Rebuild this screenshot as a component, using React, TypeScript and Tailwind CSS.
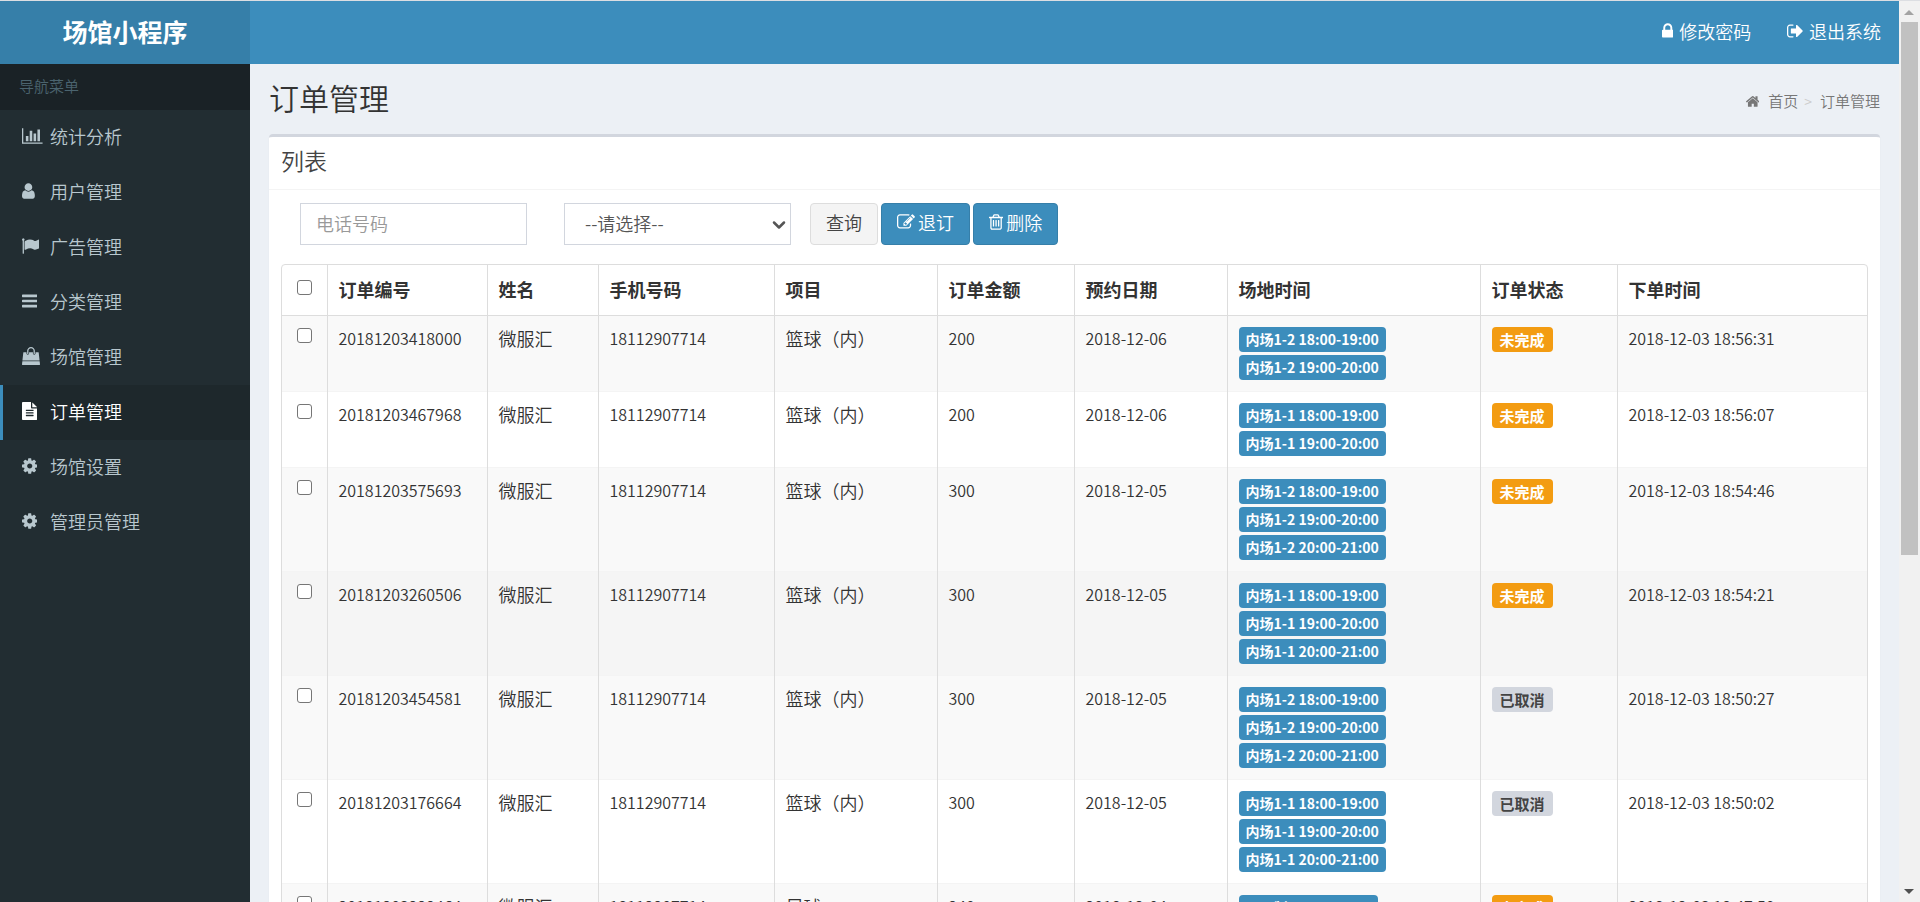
import React, { useState } from 'react';
import { ChevronDown } from 'lucide-react';
import clsx from 'clsx';

const ICONS = {
  chart: {
    box: '0 0 2048 1792',
    d: 'M640 896v512h-256v-512h256zm384-512v1024h-256v-1024h256zm1024 1152v128h-2048v-1536h128v1408h1920zm-640-896v768h-256v-768h256zm384-384v1152h-256v-1152h256z',
  },
  user: {
    box: '256 0 1280 1792',
    d: 'M1536 1399q0 109-62.5 187t-150.5 78h-854q-88 0-150.5-78t-62.5-187q0-85 8.5-160.5t31.5-152 58.5-131 94-89 134.5-34.5q131 128 313 128t313-128q76 0 134.5 34.5t94 89 58.5 131 31.5 152 8.5 160.5zm-256-887q0 159-112.5 271.5t-271.5 112.5-271.5-112.5-112.5-271.5 112.5-271.5 271.5-112.5 271.5 112.5 112.5 271.5z',
  },
  flag: {
    box: '64 0 1728 1792',
    d: 'M320 256q0 72-64 110v1266q0 13-9.5 22.5t-22.5 9.5h-64q-13 0-22.5-9.5t-9.5-22.5v-1266q-64-38-64-110 0-53 37.5-90.5t90.5-37.5 90.5 37.5 37.5 90.5zm1472 64v763q0 25-12.5 38.5t-39.5 27.5q-215 116-369 116-61 0-123.5-22t-108.5-48-115.5-48-142.5-22q-192 0-464 146-17 9-33 9-26 0-45-19t-19-45v-742q0-32 31-55 21-14 79-43 236-120 421-120 107 0 200 29t219 88q38 19 88 19 54 0 117.5-21t110-47 88-47 54.5-21q26 0 45 19t19 45z',
  },
  bars: {
    box: '128 0 1536 1792',
    d: 'M1664 1344v128q0 26-19 45t-45 19h-1408q-26 0-45-19t-19-45v-128q0-26 19-45t45-19h1408q26 0 45 19t19 45zm0-512v128q0 26-19 45t-45 19h-1408q-26 0-45-19t-19-45v-128q0-26 19-45t45-19h1408q26 0 45 19t19 45zm0-512v128q0 26-19 45t-45 19h-1408q-26 0-45-19t-19-45v-128q0-26 19-45t45-19h1408q26 0 45 19t19 45z',
  },
  bag: {
    box: '0 0 1792 1792',
    d: 'M1757 1408l35 313q3 28-16 50-19 21-48 21h-1664q-29 0-48-21-19-22-16-50l35-313h1722zm-93-839l86 775h-1708l86-775q3-24 21-40.5t43-16.5h256v128q0 53 37.5 90.5t90.5 37.5 90.5-37.5 37.5-90.5v-128h384v128q0 53 37.5 90.5t90.5 37.5 90.5-37.5 37.5-90.5v-128h256q25 0 43 16.5t21 40.5zm-384-185v256q0 26-19 45t-45 19-45-19-19-45v-256q0-106-75-181t-181-75-181 75-75 181v256q0 26-19 45t-45 19-45-19-19-45v-256q0-159 112.5-271.5t271.5-112.5 271.5 112.5 112.5 271.5z',
  },
  file: {
    box: '128 0 1536 1792',
    d: 'M1596 476q14 14 28 36h-472v-472q22 14 36 28zm-476 164h544v1056q0 40-28 68t-68 28h-1344q-40 0-68-28t-28-68v-1600q0-40 28-68t68-28h800v544q0 40 28 68t68 28zm160 736v-64q0-14-9-23t-23-9h-704q-14 0-23 9t-9 23v64q0 14 9 23t23 9h704q14 0 23-9t9-23zm0-256v-64q0-14-9-23t-23-9h-704q-14 0-23 9t-9 23v64q0 14 9 23t23 9h704q14 0 23-9t9-23zm0-256v-64q0-14-9-23t-23-9h-704q-14 0-23 9t-9 23v64q0 14 9 23t23 9h704q14 0 23-9t9-23z',
  },
  cog: {
    box: '128 0 1536 1792',
    d: 'M1152 896q0-106-75-181t-181-75-181 75-75 181 75 181 181 75 181-75 75-181zm512-109v222q0 12-8 23t-20 13l-185 28q-19 54-39 91 35 50 107 138 10 12 10 25t-9 23q-27 37-99 108t-94 71q-12 0-26-9l-138-108q-44 23-91 38-16 136-29 186-7 28-36 28h-222q-14 0-24.5-8.5t-11.5-21.5l-28-184q-49-16-90-37l-141 107q-10 9-25 9-14 0-25-11-126-114-165-168-7-10-7-23 0-12 8-23 15-21 51-66.5t54-70.5q-27-50-41-99l-183-27q-13-2-21-12.5t-8-23.5v-222q0-12 8-23t19-13l186-28q14-46 39-92-40-57-107-138-10-12-10-24 0-10 9-23 26-36 98.5-107.5t94.5-71.5q13 0 26 10l138 107q44-23 91-38 16-136 29-186 7-28 36-28h222q14 0 24.5 8.5t11.5 21.5l28 184q49 16 90 37l142-107q9-9 24-9 13 0 25 10 129 119 165 170 7 8 7 22 0 12-8 23-15 21-51 66.5t-54 70.5q26 50 41 98l183 28q13 2 21 12.5t8 23.5z',
  },
  lock: {
    box: '320 0 1152 1792',
    d: 'M640 768h512v-192q0-106-75-181t-181-75-181 75-75 181v192zm832 96v576q0 40-28 68t-68 28h-960q-40 0-68-28t-28-68v-576q0-40 28-68t68-28h32v-192q0-184 132-316t316-132 316 132 132 316v192h32q40 0 68 28t28 68z',
  },
  signOut: {
    box: '64 0 1568 1792',
    d: 'M704 1440q0 4 1 20t.5 26.5-3 23.5-10 19.5-20.5 6.5h-320q-119 0-203.5-84.5t-84.5-203.5v-704q0-119 84.5-203.5t203.5-84.5h320q13 0 22.5 9.5t9.5 22.5q0 4 1 20t.5 26.5-3 23.5-10 19.5-20.5 6.5h-320q-66 0-113 47t-47 113v704q0 66 47 113t113 47h312l11.5 1 11.5 3 8 5.5 7 9 2 13.5zm928-544q0 26-19 45l-544 544q-19 19-45 19t-45-19-19-45v-288h-448q-26 0-45-19t-19-45v-384q0-26 19-45t45-19h448v-288q0-26 19-45t45-19 45 19l544 544q19 19 19 45z',
  },
  home: {
    box: '88 0 1616 1792',
    d: 'M1472 992v480q0 26-19 45t-45 19h-384v-384h-256v384h-384q-26 0-45-19t-19-45v-480q0-1 .5-3t.5-3l575-474 575 474q1 2 1 6zm223-69l-62 74q-8 9-21 11h-3q-13 0-21-7l-692-577-692 577q-12 8-24 7-13-2-21-11l-62-74q-8-10-7-23.5t11-21.5l719-599q32-26 76-26t76 26l244 204v-195q0-14 9-23t23-9h192q14 0 23 9t9 23v408l219 182q10 8 11 21.5t-7 23.5z',
  },
  edit: {
    box: '0 0 1792 1792',
    d: 'M888 1184l116-116-152-152-116 116v56h96v96h56zm440-720q-16-16-33 1l-350 350q-17 17-1 33t33-1l350-350q17-17 1-33zm80 594v190q0 119-84.5 203.5t-203.5 84.5h-832q-119 0-203.5-84.5t-84.5-203.5v-832q0-119 84.5-203.5t203.5-84.5h832q63 0 117 25 15 7 18 23 3 17-9 29l-49 49q-14 14-32 8-23-6-45-6h-832q-66 0-113 47t-47 113v832q0 66 47 113t113 47h832q66 0 113-47t47-113v-126q0-13 9-22l64-64q15-15 35-7t20 29zm-96-738l288 288-672 672h-288v-288zm444 132l-92 92-288-288 92-92q28-28 68-28t68 28l152 152q28 28 28 68t-28 68z',
  },
  trash: {
    box: '192 0 1408 1792',
    d: 'M704 736v576q0 14-9 23t-23 9h-64q-14 0-23-9t-9-23v-576q0-14 9-23t23-9h64q14 0 23 9t9 23zm256 0v576q0 14-9 23t-23 9h-64q-14 0-23-9t-9-23v-576q0-14 9-23t23-9h64q14 0 23 9t9 23zm256 0v576q0 14-9 23t-23 9h-64q-14 0-23-9t-9-23v-576q0-14 9-23t23-9h64q14 0 23 9t9 23zm128 724v-948h-896v948q0 22 7 40.5t14.5 27 10.5 8.5h832q3 0 10.5-8.5t14.5-27 7-40.5zm-672-1076h448l-48-117q-7-9-17-11h-317q-10 2-17 11zm928 32v64q0 14-9 23t-23 9h-96v948q0 83-47 143.5t-113 60.5h-832q-66 0-113-58.5t-47-141.5v-952h-96q-14 0-23-9t-9-23v-64q0-14 9-23t23-9h309l70-167q15-37 54-63t79-26h320q40 0 79 26t54 63l70 167h309q14 0 23 9t9 23z',
  },
};

type IconName = keyof typeof ICONS;

const MENU: { label: string; icon: IconName }[] = [
  { label: '统计分析', icon: 'chart' },
  { label: '用户管理', icon: 'user' },
  { label: '广告管理', icon: 'flag' },
  { label: '分类管理', icon: 'bars' },
  { label: '场馆管理', icon: 'bag' },
  { label: '订单管理', icon: 'file' },
  { label: '场馆设置', icon: 'cog' },
  { label: '管理员管理', icon: 'cog' },
];

const COLUMNS = [
  { title: '订单编号', width: 'w-[160px]' },
  { title: '姓名', width: 'w-[111px]' },
  { title: '手机号码', width: 'w-[176px]' },
  { title: '项目', width: 'w-[163px]' },
  { title: '订单金额', width: 'w-[137px]' },
  { title: '预约日期', width: 'w-[153px]' },
  { title: '场地时间', width: 'w-[253px]' },
  { title: '订单状态', width: 'w-[137px]' },
  { title: '下单时间', width: '' },
];

const ORDERS = [
  { id: '20181203418000', project: '篮球（内）', amount: 200, date: '2018-12-06', slots: ['内场1-2 18:00-19:00', '内场1-2 19:00-20:00'], status: '未完成', created: '2018-12-03 18:56:31' },
  { id: '20181203467968', project: '篮球（内）', amount: 200, date: '2018-12-06', slots: ['内场1-1 18:00-19:00', '内场1-1 19:00-20:00'], status: '未完成', created: '2018-12-03 18:56:07' },
  { id: '20181203575693', project: '篮球（内）', amount: 300, date: '2018-12-05', slots: ['内场1-2 18:00-19:00', '内场1-2 19:00-20:00', '内场1-2 20:00-21:00'], status: '未完成', created: '2018-12-03 18:54:46' },
  { id: '20181203260506', project: '篮球（内）', amount: 300, date: '2018-12-05', slots: ['内场1-1 18:00-19:00', '内场1-1 19:00-20:00', '内场1-1 20:00-21:00'], status: '未完成', created: '2018-12-03 18:54:21', hovered: true },
  { id: '20181203454581', project: '篮球（内）', amount: 300, date: '2018-12-05', slots: ['内场1-2 18:00-19:00', '内场1-2 19:00-20:00', '内场1-2 20:00-21:00'], status: '已取消', created: '2018-12-03 18:50:27' },
  { id: '20181203176664', project: '篮球（内）', amount: 300, date: '2018-12-05', slots: ['内场1-1 18:00-19:00', '内场1-1 19:00-20:00', '内场1-1 20:00-21:00'], status: '已取消', created: '2018-12-03 18:50:02' },
  { id: '20181203229464', project: '足球', amount: 240, date: '2018-12-04', slots: ['五人制 18:00-19:00'], status: '未完成', created: '2018-12-03 18:47:50' },
];

const Icon = ({ name, className = 'h-[18px]' }: { name: IconName; className?: string }) => (
  <svg viewBox={ICONS[name].box} className={clsx('w-auto shrink-0 fill-current', className)} aria-hidden="true">
    <path d={ICONS[name].d} />
  </svg>
);

const Checkbox = ({ label }: { label: string }) => (
  <input
    type="checkbox"
    aria-label={label}
    className="block h-[15px] w-[15px] appearance-none rounded-[3px] border border-[#767676] bg-white checked:bg-[#3c8dbc]"
  />
);

const Sidebar = () => {
  const [active, setActive] = useState('订单管理');

  return (
    <aside className="w-[250px] shrink-0 bg-[#222d32]">
      <div className="flex h-[46px] items-center bg-[#1a2226] px-[19px] pb-0.5 text-[15px] text-[#4b646f]">导航菜单</div>
      <nav>
        {MENU.map((item) => (
          <a
            key={item.label}
            href="#"
            onClick={() => setActive(item.label)}
            className={clsx(
              'flex h-[55px] items-center border-l-3 pb-1 pl-[19px] text-lg',
              item.label === active
                ? 'border-[#3c8dbc] bg-[#1e282c] text-white'
                : 'border-transparent text-[#b8c7ce]'
            )}
          >
            <span className="w-7">
              <Icon name={item.icon} />
            </span>
            {item.label}
          </a>
        ))}
      </nav>
    </aside>
  );
};

const Toolbar = () => (
  <form className="flex px-[19px]">
    <input
      type="text"
      aria-label="电话号码"
      placeholder="电话号码"
      className="h-[42px] w-[227px] border border-[#d2d6de] px-[15px] pb-0.5 text-lg text-[#555] placeholder:text-[#999]"
    />
    <div className="relative ml-[37px] w-[227px]">
      <select
        aria-label="订单状态"
        className="h-[42px] w-full appearance-none border border-[#d2d6de] bg-white px-5 pb-0.5 text-lg text-[#555]"
      >
        <option>--请选择--</option>
        <option>未完成</option>
        <option>已取消</option>
      </select>
      <ChevronDown className="pointer-events-none absolute top-3 right-0.5 h-5 w-5 text-[#555]" strokeWidth={3} />
    </div>
    <div className="ml-[19px] flex gap-[3px] text-lg">
      <button type="button" className="h-[42px] rounded border border-[#ddd] bg-[#f4f4f4] px-[15px] pb-1 text-[#444]">
        查询
      </button>
      <button type="button" className="flex h-[42px] items-center gap-[3px] rounded border border-[#367fa9] bg-[#3c8dbc] px-[15px] pb-1 text-white">
        <Icon name="edit" />
        退订
      </button>
      <button type="button" className="flex h-[42px] items-center gap-[3px] rounded border border-[#367fa9] bg-[#3c8dbc] px-[15px] pb-1 text-white">
        <Icon name="trash" />
        删除
      </button>
    </div>
  </form>
);

const OrderTable = () => (
  <div className="mt-[19px] overflow-hidden rounded border border-[#ddd]">
    <table className="w-full table-fixed text-left text-base text-[#333]">
      <thead>
        <tr className="h-[50px] text-lg">
          <th className="w-[45px] border-r border-[#ddd] px-[15px] pb-1">
            <Checkbox label="全选" />
          </th>
          {COLUMNS.map((column) => (
            <th key={column.title} className={clsx('border-r border-[#ddd] px-[11px] pb-0.5 font-bold last:border-r-0', column.width)}>
              {column.title}
            </th>
          ))}
        </tr>
      </thead>
      <tbody>
        {ORDERS.map((order) => (
          <tr
            key={order.id}
            className={clsx(
              'border-t border-[#f4f4f4] align-top leading-[25px] first:border-[#ddd] [&>td]:border-r [&>td]:border-r-[#ddd] [&>td]:px-[11px] [&>td]:pt-2.5 [&>td:last-child]:border-r-0',
              order.hovered ? 'bg-[#f5f5f5]' : 'odd:bg-[#f9f9f9]'
            )}
          >
            <td>
              <div className="px-1 pt-0.5">
                <Checkbox label={order.id} />
              </div>
            </td>
            <td>{order.id}</td>
            <td className="text-lg leading-[25px]">微服汇</td>
            <td>18112907714</td>
            <td className="text-lg leading-[25px]">{order.project}</td>
            <td>{order.amount}</td>
            <td>{order.date}</td>
            <td>
              <div className="flex flex-col items-start gap-[3px] pt-px pb-[11px]">
                {order.slots.map((slot) => (
                  <span key={slot} className="rounded bg-[#3c8dbc] px-[7px] text-sm leading-[25px] font-bold text-white">
                    {slot}
                  </span>
                ))}
              </div>
            </td>
            <td>
              <div className="flex pt-px">
                <span
                  className={clsx(
                    'rounded px-2 text-[15px] leading-[25px] font-bold',
                    order.status === '未完成' ? 'bg-[#f39c12] text-white' : 'bg-[#d2d6de] text-[#444]'
                  )}
                >
                  {order.status}
                </span>
              </div>
            </td>
            <td>{order.created}</td>
          </tr>
        ))}
      </tbody>
    </table>
  </div>
);

const ScrollBar = () => (
  <div className="flex w-[21px] shrink-0 flex-col items-center bg-[#f1f1f1]">
    <svg viewBox="0 0 21 21" className="h-[21px] w-[21px] shrink-0 fill-[#a3a3a3]">
      <path d="M5 14h10l-5-5z" />
    </svg>
    <div className="min-h-0 w-full flex-1 px-0.5">
      <div className="h-[62%] bg-[#c1c1c1]" />
    </div>
    <svg viewBox="0 0 21 21" className="h-[21px] w-[21px] shrink-0 fill-[#505050]">
      <path d="M5 8h10l-5 5z" />
    </svg>
  </div>
);

export default function App() {
  return (
    <div className="flex h-screen overflow-hidden border-t border-[#dcdee2] font-['Noto_Sans_CJK_SC',sans-serif] font-[350]">
      <div className="flex min-w-0 flex-1 flex-col">
        <header className="flex h-[63px] shrink-0 bg-[#3c8dbc] text-white">
          <a href="#" className="flex w-[250px] items-center justify-center bg-[#367fa9] pb-0.5 text-[25px] font-bold">
            场馆小程序
          </a>
          <nav className="ml-auto flex items-center gap-9 pr-[18px] pb-1 text-lg">
            <a href="#" className="flex items-center gap-1.5">
              <Icon name="lock" />
              修改密码
            </a>
            <a href="#" className="flex items-center gap-1.5">
              <Icon name="signOut" />
              退出系统
            </a>
          </nav>
        </header>

        <div className="flex min-h-0 flex-1">
          <Sidebar />
          <main className="min-w-0 flex-1 overflow-hidden bg-[#ecf0f5] px-[19px]">
            <div className="flex h-[70px] items-center justify-between">
              <h1 className="pb-1 text-[30px] font-[350] text-[#333]">订单管理</h1>
              <ol className="flex items-center pt-1 text-[15px] text-[#777]">
                <li>
                  <a href="#" className="flex items-center gap-[9px]">
                    <Icon name="home" className="h-[15px]" />
                    首页
                  </a>
                </li>
                <li className="pr-2 pl-1.5 text-sm text-[#ccc]">&gt;</li>
                <li>订单管理</li>
              </ol>
            </div>

            {/* Order list box */}
            <section className="rounded border-t-3 border-[#d2d6de] bg-white shadow-[0_1px_1px_rgba(0,0,0,0.1)]">
              <h2 className="flex h-[53px] items-center border-b border-[#f4f4f4] px-3 pb-1.5 text-[23px] text-[#444]">列表</h2>
              <div className="px-3 py-[13px]">
                <Toolbar />
                <OrderTable />
              </div>
            </section>
          </main>
        </div>
      </div>
      <ScrollBar />
    </div>
  );
}
